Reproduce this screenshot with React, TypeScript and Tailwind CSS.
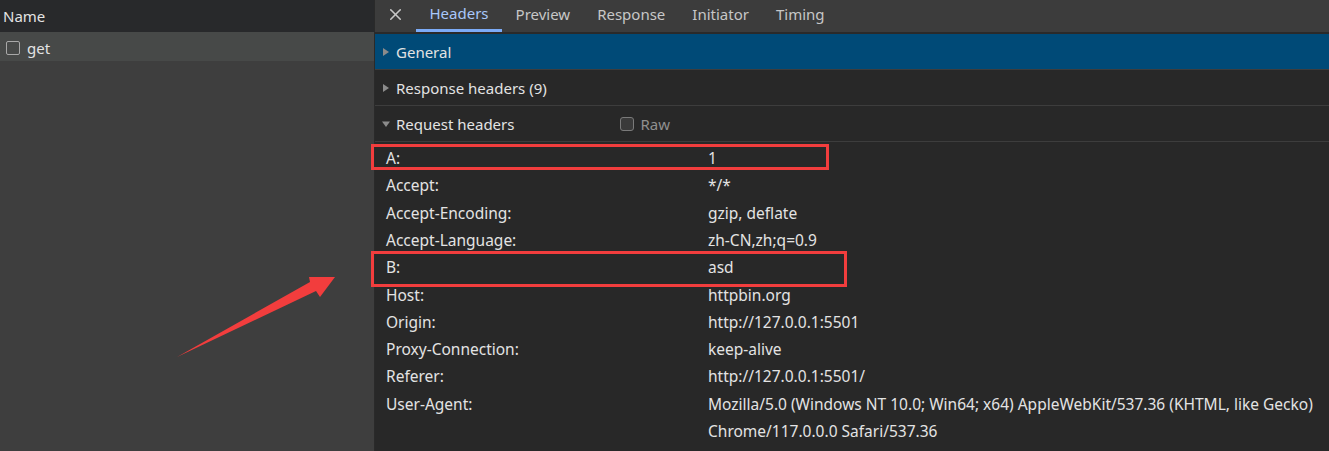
import { X } from "lucide-react";

const HEADERS: [string, string][] = [
  ["A:", "1"],
  ["Accept:", "*/*"],
  ["Accept-Encoding:", "gzip, deflate"],
  ["Accept-Language:", "zh-CN,zh;q=0.9"],
  ["B:", "asd"],
  ["Host:", "httpbin.org"],
  ["Origin:", "http://127.0.0.1:5501"],
  ["Proxy-Connection:", "keep-alive"],
  ["Referer:", "http://127.0.0.1:5501/"],
  ["User-Agent:", "Mozilla/5.0 (Windows NT 10.0; Win64; x64) AppleWebKit/537.36 (KHTML, like Gecko)"],
  ["", "Chrome/117.0.0.0 Safari/537.36"],
];

const TABS = ["Headers", "Preview", "Response", "Initiator", "Timing"];

function Caret({ open }: { open?: boolean }) {
  return (
    <svg width="8" height="8" viewBox="0 0 8 8" className="mr-[6px] shrink-0">
      {open ? <path d="M0 1.5 L8 1.5 L4 7 Z" fill="#8b8b8b" /> : <path d="M1 0 L7 4 L1 8 Z" fill="#8b8b8b" />}
    </svg>
  );
}

function Section({ title, open, blue, children }: { title: string; open?: boolean; blue?: boolean; children?: React.ReactNode }) {
  return (
    <div
      className={`flex h-[36px] items-center border-b border-[#3d3d3d] pl-[7px] pt-px ${blue ? "bg-[#004a77]" : ""}`}
    >
      <Caret open={open} />
      <span className="text-[#e3e3e3]">{title}</span>
      {children}
    </div>
  );
}

export default function App() {
  return (
    <div
      className="flex h-[451px] w-[1329px] overflow-hidden bg-[#282828] text-[15px] text-[#e3e3e3]"
      style={{ fontFamily: '"Noto Sans", "Open Sans", sans-serif' }}
    >
      {/* request list */}
      <div className="flex w-[374px] shrink-0 flex-col bg-[#3e3e3e]">
        <div className="flex h-[32px] items-center bg-[#28292b] pl-[3px]">Name</div>
        <div className="flex h-[29px] items-center gap-[7px] bg-[#474948] pl-[6px] pt-[3px]">
          <span className="h-[14px] w-[14px] rounded-[2px] border border-[#a8a8a8]" />
          <span>get</span>
        </div>
      </div>
      <div className="w-px shrink-0 bg-[#2a2a2a]" />

      {/* details */}
      <div className="relative flex min-w-0 flex-1 flex-col">
        <div className="flex h-[32px] items-stretch bg-[#3c3c3c]">
          <div className="flex w-[41px] items-center justify-center pb-[3px] text-[#c7c7c7]">
            <X size={19} strokeWidth={2} />
          </div>
          {TABS.map((t, i) => (
            <div
              key={t}
              className={`flex items-center px-[13.5px] pb-[3px] ${
                i === 0 ? "border-b-[3px] border-[#7cacf8] pb-0 text-[#a8c7fa]" : "text-[#c7c7c7]"
              }`}
            >
              {t}
            </div>
          ))}
        </div>
        <div className="h-[2px] bg-[#2a2a2a]" />

        <Section title="General" blue />
        <Section title="Response headers (9)" />
        <Section title="Request headers" open>
          <div className="ml-[106px] flex items-center gap-[6px] text-[#8f8f8f]">
            <span className="h-[14px] w-[14px] rounded-[3px] border border-[#7a7a7a] bg-[#3a3a3a]" />
            <span>Raw</span>
          </div>
        </Section>

        <div className="pt-[3px] text-[15.5px]">
          {HEADERS.map(([k, v], i) => (
            <div key={i} className="flex h-[27.3px] items-center whitespace-nowrap">
              <span className="w-[333px] shrink-0 pl-[11px]">{k}</span>
              <span>{v}</span>
            </div>
          ))}
        </div>

        {/* annotations */}
        <div className="absolute left-[-4px] top-[144px] h-[26px] w-[458px] border-[3px] border-[#f23d3d]" />
        <div className="absolute left-[-4px] top-[251px] h-[36px] w-[476px] border-[3px] border-[#f23d3d]" />
      </div>

      <svg className="absolute left-0 top-0" width="1329" height="451" viewBox="0 0 1329 451">
        <path d="M177 357 L316 291 L320 297 L335 277 L309 277 L310 282 Z" fill="#f23d3d" />
      </svg>
    </div>
  );
}
